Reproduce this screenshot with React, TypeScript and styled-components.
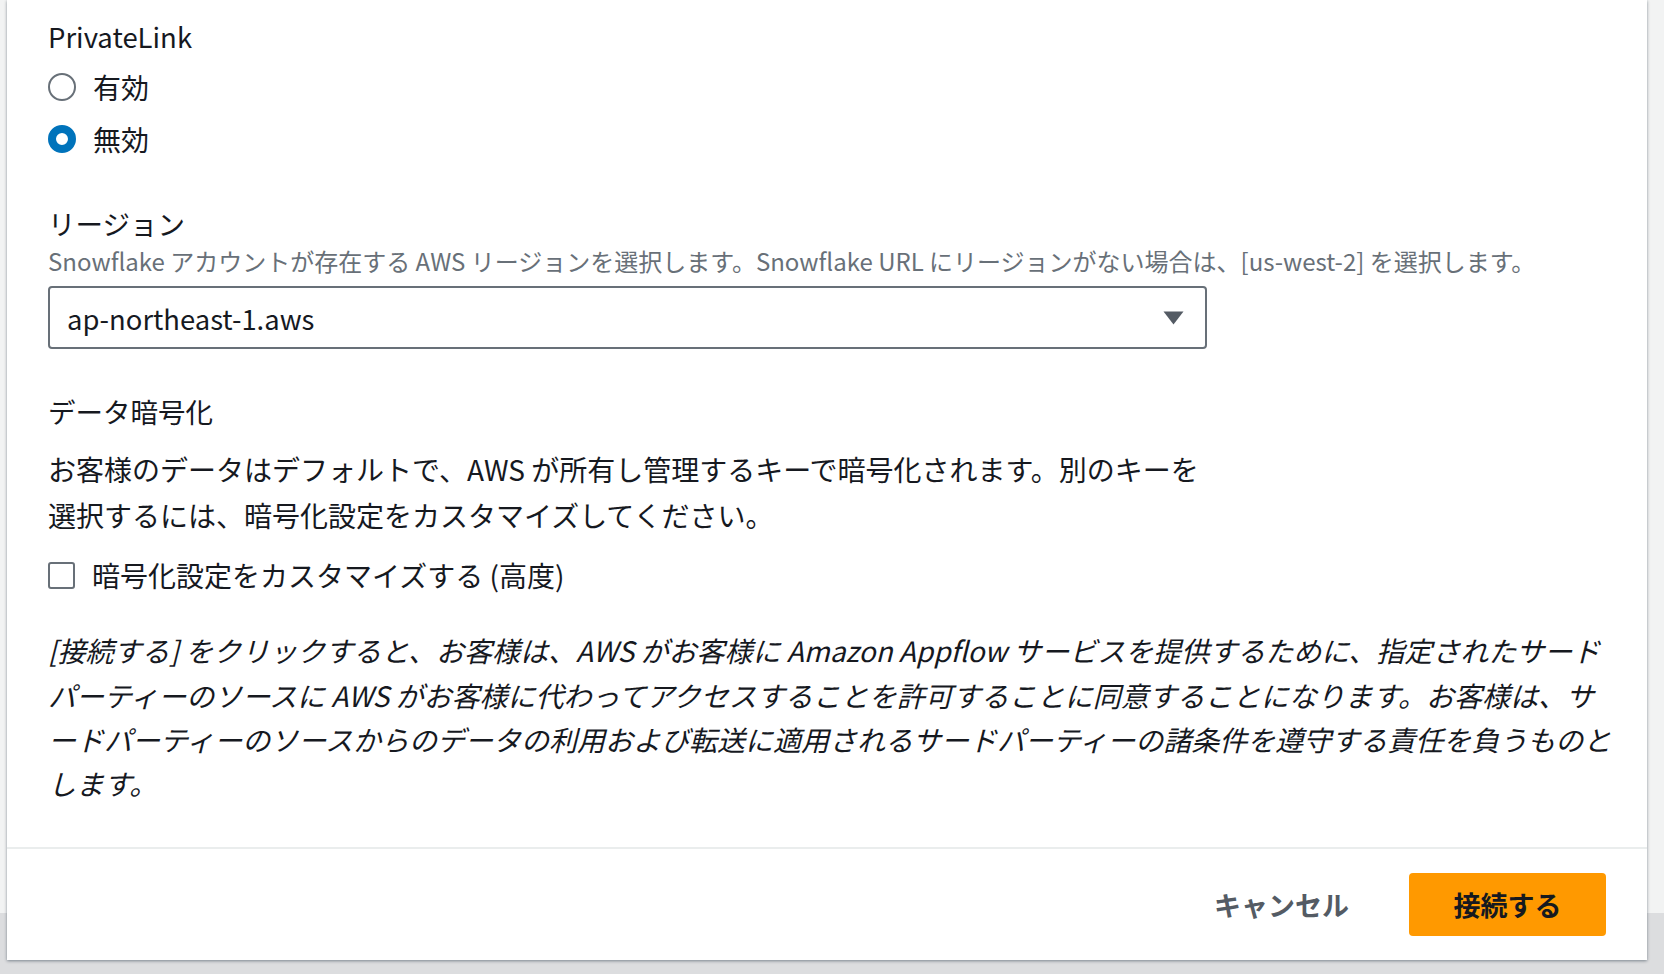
import React, { FC, useState } from 'react';
import styled, { createGlobalStyle } from 'styled-components';

// @ global
const GlobalStyle = createGlobalStyle`
  html, body {
    margin: 0;
    padding: 0;
  }
  body {
    font-family: 'Noto Sans CJK JP', 'Noto Sans', sans-serif;
    color: #16191f;
    overflow: hidden;
  }
`;

const regions = ['ap-northeast-1.aws', 'us-west-2', 'us-east-1.aws'];

const noticeLines = [
  '[接続する] をクリックすると、お客様は、AWS がお客様に Amazon Appflow サービスを提供するために、指定されたサード',
  'パーティーのソースに AWS がお客様に代わってアクセスすることを許可することに同意することになります。お客様は、サ',
  'ードパーティーのソースからのデータの利用および転送に適用されるサードパーティーの諸条件を遵守する責任を負うものと',
  'します。',
];

// @ App
const App: FC = () => {
  const [privateLink, setPrivateLink] = useState<'on' | 'off'>('off');
  const [customize, setCustomize] = useState(false);
  const [region] = useState(regions[0]);

  return (
    <>
      <GlobalStyle />
      <Screen>
        <Modal>
          <Content>
            <FieldLabel>PrivateLink</FieldLabel>
            <RadioGroup>
              <RadioRow onClick={() => setPrivateLink('on')}>
                <RadioCircle checked={privateLink === 'on'} />
                <OptionText>有効</OptionText>
              </RadioRow>
              <RadioRow onClick={() => setPrivateLink('off')}>
                <RadioCircle checked={privateLink === 'off'} />
                <OptionText>無効</OptionText>
              </RadioRow>
            </RadioGroup>

            <Section gap={38}>
              <FieldLabel>リージョン</FieldLabel>
              <Description>
                Snowflake アカウントが存在する AWS リージョンを選択します。Snowflake URL にリージョンがない場合は、[us-west-2] を選択します。
              </Description>
              <SelectBox>
                <SelectValue>{region}</SelectValue>
                <svg width="21" height="14" viewBox="0 0 21 14">
                  <path d="M0.5 0.5 H20.5 L10.5 13.5 Z" fill="#545b64" />
                </svg>
              </SelectBox>
            </Section>

            <Section gap={42}>
              <FieldLabel>データ暗号化</FieldLabel>
              <Paragraph>
                お客様のデータはデフォルトで、AWS が所有し管理するキーで暗号化されます。別のキーを
                <br />
                選択するには、暗号化設定をカスタマイズしてください。
              </Paragraph>
              <CheckRow onClick={() => setCustomize(!customize)}>
                <CheckBox checked={customize} />
                <OptionText>暗号化設定をカスタマイズする (高度)</OptionText>
              </CheckRow>
            </Section>

            <Notice>
              {noticeLines.map((line) => (
                <NoticeLine key={line}>{line}</NoticeLine>
              ))}
            </Notice>
          </Content>

          <Footer>
            <LinkButton>キャンセル</LinkButton>
            <PrimaryButton>接続する</PrimaryButton>
          </Footer>
        </Modal>
      </Screen>
    </>
  );
};

// @ styles

const Screen = styled.div`
  width: 1664px;
  height: 974px;
  display: flex;
  align-items: flex-start;
  background: linear-gradient(to bottom, #f2f3f3 0, #f2f3f3 913px, #dcdddf 913px, #dcdddf 100%);
`;

const Modal = styled.div`
  margin-left: 7px;
  width: 1640px;
  height: 960px;
  background: #ffffff;
  box-shadow: 0 1px 3px rgba(0, 22, 40, 0.45);
  display: flex;
  flex-direction: column;
`;

const Content = styled.div`
  flex: 1;
  padding: 16px 41px 0 41px;
`;

const FieldLabel = styled.div`
  font-size: 27.5px;
  line-height: 40px;
  color: #16191f;
`;

const RadioGroup = styled.div`
  margin-top: 5px;
  display: flex;
  flex-direction: column;
`;

const RadioRow = styled.label`
  height: 52px;
  display: flex;
  align-items: center;
  cursor: pointer;
`;

const RadioCircle = styled.span<{ checked: boolean }>`
  box-sizing: border-box;
  width: 28px;
  height: 28px;
  border-radius: 50%;
  background: #ffffff;
  border: ${(props) => (props.checked ? '8px solid #0073bb' : '2px solid #687078')};
  flex-shrink: 0;
`;

const OptionText = styled.span`
  margin-left: 17px;
  font-size: 28px;
  line-height: 40px;
`;

const Section = styled.div<{ gap: number }>`
  margin-top: ${(props) => props.gap}px;
`;

const Description = styled.div`
  font-size: 24px;
  line-height: 36px;
  color: #687078;
`;

const SelectBox = styled.div`
  box-sizing: border-box;
  margin-top: 7px;
  width: 1159px;
  height: 63px;
  border: 2px solid #687078;
  border-radius: 4px;
  padding: 0 21px 0 17px;
  display: flex;
  align-items: center;
  justify-content: space-between;
  cursor: pointer;
`;

const SelectValue = styled.span`
  font-size: 27.4px;
  color: #16191f;
`;

const Paragraph = styled.p`
  margin: 16px 0 0;
  font-size: 28px;
  line-height: 45.6px;
`;

const CheckRow = styled.label`
  margin-top: 17px;
  height: 40px;
  display: flex;
  align-items: center;
  cursor: pointer;
`;

const CheckBox = styled.span<{ checked: boolean }>`
  box-sizing: border-box;
  width: 27px;
  height: 27px;
  border: 2px solid #687078;
  border-radius: 3px;
  background: ${(props) => (props.checked ? '#0073bb' : '#ffffff')};
  flex-shrink: 0;
`;

const Notice = styled.p`
  margin: 33px 0 0;
  font-size: 28px;
  line-height: 44.4px;
  font-style: italic;
  color: #16191f;
`;

const NoticeLine = styled.span`
  display: block;
  white-space: nowrap;
`;

const Footer = styled.div`
  box-sizing: border-box;
  height: 113px;
  border-top: 2px solid #eaeded;
  padding: 0 41px;
  display: flex;
  align-items: center;
  justify-content: flex-end;
  gap: 17px;
`;

const LinkButton = styled.button`
  font-family: inherit;
  font-size: 27px;
  font-weight: 700;
  color: #545b64;
  background: transparent;
  border: none;
  height: 63px;
  padding: 0 43px;
  cursor: pointer;
`;

const PrimaryButton = styled.button`
  font-family: inherit;
  font-size: 27px;
  font-weight: 700;
  color: #16191f;
  background: #ff9900;
  border: none;
  border-radius: 4px;
  height: 63px;
  width: 197px;
  cursor: pointer;
`;

export default App;
